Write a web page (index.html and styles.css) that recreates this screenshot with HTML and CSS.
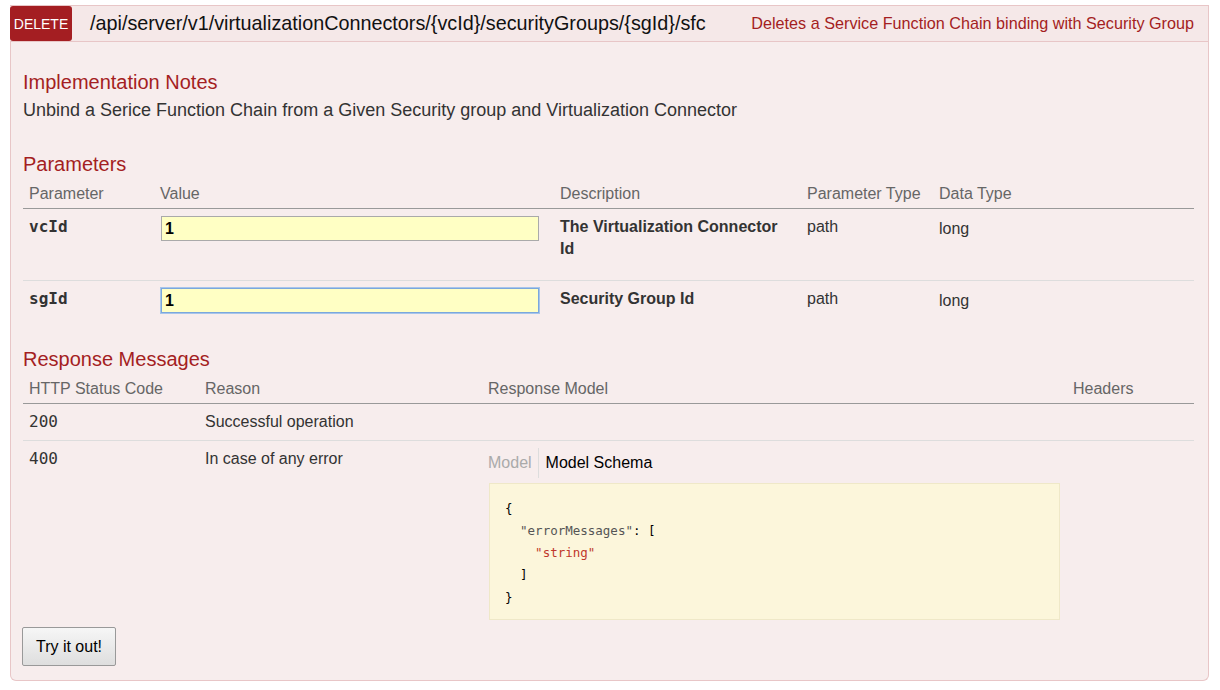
FILE: index.html
```html
<!DOCTYPE html>
<html>
<head>
<meta charset="utf-8">
<link rel="stylesheet" href="styles.css">
</head>
<body>
<div class="op">
  <div class="heading">
    <span class="method">DELETE</span>
    <span class="path">/api/server/v1/virtualizationConnectors/{vcId}/securityGroups/{sgId}/sfc</span>
    <span class="summary">Deletes a Service Function Chain binding with Security Group</span>
  </div>
  <div class="content">
    <h4 class="h-notes">Implementation Notes</h4>
    <p class="notes">Unbind a Serice Function Chain from a Given Security group and Virtualization Connector</p>

    <h4 class="h-params">Parameters</h4>
    <table class="tbl params">
      <colgroup>
        <col class="c-p1"><col class="c-p2"><col class="c-p3"><col class="c-p4"><col class="c-p5">
      </colgroup>
      <thead>
        <tr><th>Parameter</th><th>Value</th><th>Description</th><th>Parameter Type</th><th>Data Type</th></tr>
      </thead>
      <tbody>
        <tr>
          <td class="code">vcId</td>
          <td><input class="param" type="text" value="1"></td>
          <td class="desc">The Virtualization Connector Id</td>
          <td>path</td>
          <td class="dtype">long</td>
        </tr>
        <tr>
          <td class="code">sgId</td>
          <td><input class="param focused" type="text" value="1"></td>
          <td class="desc">Security Group Id</td>
          <td>path</td>
          <td class="dtype">long</td>
        </tr>
      </tbody>
    </table>

    <h4 class="h-resp">Response Messages</h4>
    <table class="tbl resp">
      <colgroup>
        <col class="c-r1"><col class="c-r2"><col class="c-r3"><col class="c-r4">
      </colgroup>
      <thead>
        <tr><th>HTTP Status Code</th><th>Reason</th><th>Response Model</th><th>Headers</th></tr>
      </thead>
      <tbody>
        <tr>
          <td class="status">200</td>
          <td>Successful operation</td>
          <td></td>
          <td></td>
        </tr>
        <tr>
          <td class="status">400</td>
          <td>In case of any error</td>
          <td>
            <div class="tabs">
              <span class="tab off">Model</span>
              <span class="tab on">Model Schema</span>
            </div>
            <pre class="schema"><span class="ln">{</span>
<span class="ln">  <span class="k">"errorMessages"</span>: [</span>
<span class="ln">    <span class="s">"string"</span></span>
<span class="ln">  ]</span>
<span class="ln">}</span></pre>
          </td>
          <td></td>
        </tr>
      </tbody>
    </table>

    <button class="try">Try it out!</button>
  </div>
</div>
</body>
</html>
```

FILE: styles.css
```css
* { box-sizing: border-box; }
html, body { margin: 0; padding: 0; background: #ffffff; }
body {
  font-family: "Liberation Sans", Arial, sans-serif;
  color: #333;
  padding: 5px 11px 0 10px;
}

.op { width: 1199px; }

.heading {
  display: flex;
  align-items: center;
  height: 37px;
  background: #f5e8e8;
  border: 1px solid #e8c6c7;
  border-left: none;
}
.method {
  display: flex;
  align-items: center;
  justify-content: center;
  width: 62px;
  height: 35px;
  background: #a41e22;
  color: #fff;
  font-size: 14px;
  border-radius: 3px;
  padding-top: 1px;
}
.path {
  margin-left: 18px;
  font-size: 19.8px;
  color: #111;
}
.summary {
  margin-left: auto;
  padding-right: 14px;
  font-size: 16.2px;
  color: #a41e22;
}

.content {
  background: #f7eded;
  border: 1px solid #e8c6c7;
  border-top: none;
  border-radius: 0 0 6px 6px;
  padding: 28px 14px 14px 12px;
}

h4 {
  margin: 0;
  font-weight: normal;
  font-size: 20px;
  line-height: 24px;
  color: #a41e22;
}
.notes {
  margin: 5px 0 0 0;
  font-size: 18px;
  line-height: 22px;
  color: #333;
}
.h-params { margin-top: 31px; }
.h-resp { margin-top: 18px; }

.tbl {
  width: 1171px;
  border-collapse: collapse;
  table-layout: fixed;
}
.tbl th {
  text-align: left;
  font-weight: normal;
  font-size: 16px;
  line-height: 20px;
  color: #666;
  padding: 8px 6px 4px 6px;
  border-bottom: 1px solid #999;
}
.tbl td {
  vertical-align: top;
  font-size: 16px;
  line-height: 22px;
  color: #333;
  padding: 7px 6px 7px 6px;
  border-top: 1px solid #ddd;
}
.tbl tbody tr:first-child td { border-top: none; }

.c-p1 { width: 131px; }
.c-p2 { width: 400px; }
.c-p3 { width: 247px; }
.c-p4 { width: 132px; }
.c-p5 { width: 261px; }

.params td { padding-bottom: 20px; }
.params tbody tr:last-child td { padding-bottom: 16px; }

.code {
  font-family: "DejaVu Sans Mono", monospace;
  font-weight: bold;
  font-size: 13px;
  color: #000;
}
.desc { font-weight: bold; }
.dtype { padding-top: 9px !important; }

.param {
  display: block;
  width: 378px;
  height: 25px;
  margin: 0 0 0 1px;
  padding: 0 3px;
  background: #ffffc4;
  border: 1px solid #aaa;
  font-family: "Liberation Sans", Arial, sans-serif;
  font-weight: bold;
  font-size: 16px;
  color: #000;
  outline: none;
}
.param.focused {
  border: 1px solid #7ba7dd;
  box-shadow: 0 0 0 1px #a7c5ea;
}

.c-r1 { width: 176px; }
.c-r2 { width: 283px; }
.c-r3 { width: 585px; }
.c-r4 { width: 127px; }

.status {
  font-family: "DejaVu Sans Mono", monospace;
  font-size: 12px;
  color: #111;
}
.resp tbody tr:last-child td { padding-bottom: 0; }

.tabs {
  display: flex;
  height: 30px;
  align-items: center;
}
.tab {
  font-size: 16px;
  line-height: 30px;
}
.tab.off {
  color: #aaa;
  padding-right: 6px;
  border-right: 1px solid #ddd;
}
.tab.on {
  color: #000;
  padding-left: 7px;
}

.schema {
  margin: 5px 0 0 1px;
  width: 571px;
  height: 137px;
  padding: 13px 15px 12px 15px;
  background: #fcf6db;
  border: 1px solid #efe8c8;
  font-family: "DejaVu Sans Mono", monospace;
  font-size: 12.5px;
  line-height: 22.3px;
  color: #000;
}
.schema .ln { display: inline-block; line-height: 16px; vertical-align: middle; }
.schema .k { color: #555; }
.schema .s { color: #c0392b; }

.try {
  display: block;
  margin: 7px 0 0 -1px;
  width: 94px;
  height: 39px;
  font-family: "Liberation Sans", Arial, sans-serif;
  font-size: 16px;
  color: #000;
  background: linear-gradient(#f6f6f6, #dedede);
  border: 1px solid #999;
  border-radius: 2px;
  padding: 0;
}
```
